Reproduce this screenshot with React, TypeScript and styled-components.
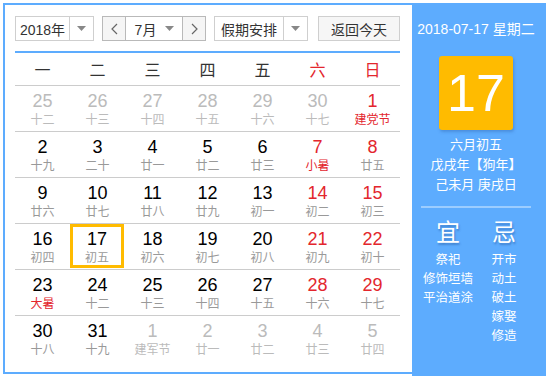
import styled, { createGlobalStyle } from "styled-components";

const GlobalStyle = createGlobalStyle`
  html, body {
    margin: 0;
    padding: 0;
    overflow: hidden;
    background: #ffffff;
    font-family: "Liberation Sans", "Noto Sans CJK SC", sans-serif;
  }
`;

const BLUE = "#5dacfe";
const RED = "#e3262d";

interface Day {
  num: number
  lunar: string
  other?: boolean
  weekend?: boolean
  redLunar?: boolean
}

const rows: Day[][] = [
  [
    { num: 25, lunar: "十二", other: true },
    { num: 26, lunar: "十三", other: true },
    { num: 27, lunar: "十四", other: true },
    { num: 28, lunar: "十五", other: true },
    { num: 29, lunar: "十六", other: true },
    { num: 30, lunar: "十七", other: true },
    { num: 1, lunar: "建党节", weekend: true, redLunar: true },
  ],
  [
    { num: 2, lunar: "十九" },
    { num: 3, lunar: "二十" },
    { num: 4, lunar: "廿一" },
    { num: 5, lunar: "廿二" },
    { num: 6, lunar: "廿三" },
    { num: 7, lunar: "小暑", weekend: true, redLunar: true },
    { num: 8, lunar: "廿五", weekend: true },
  ],
  [
    { num: 9, lunar: "廿六" },
    { num: 10, lunar: "廿七" },
    { num: 11, lunar: "廿八" },
    { num: 12, lunar: "廿九" },
    { num: 13, lunar: "初一" },
    { num: 14, lunar: "初二", weekend: true },
    { num: 15, lunar: "初三", weekend: true },
  ],
  [
    { num: 16, lunar: "初四" },
    { num: 17, lunar: "初五" },
    { num: 18, lunar: "初六" },
    { num: 19, lunar: "初七" },
    { num: 20, lunar: "初八" },
    { num: 21, lunar: "初九", weekend: true },
    { num: 22, lunar: "初十", weekend: true },
  ],
  [
    { num: 23, lunar: "大暑", redLunar: true },
    { num: 24, lunar: "十二" },
    { num: 25, lunar: "十三" },
    { num: 26, lunar: "十四" },
    { num: 27, lunar: "十五" },
    { num: 28, lunar: "十六", weekend: true },
    { num: 29, lunar: "十七", weekend: true },
  ],
  [
    { num: 30, lunar: "十八" },
    { num: 31, lunar: "十九" },
    { num: 1, lunar: "建军节", other: true },
    { num: 2, lunar: "廿一", other: true },
    { num: 3, lunar: "廿二", other: true },
    { num: 4, lunar: "廿三", other: true },
    { num: 5, lunar: "廿四", other: true },
  ],
];

const weekdays = ["一", "二", "三", "四", "五", "六", "日"];
const good = ["祭祀", "修饰垣墙", "平治道涂"];
const bad = ["开市", "动土", "破土", "嫁娶", "修造"];

const Arrow = () => (
  <svg width="9" height="5" viewBox="0 0 9 5">
    <path d="M0 0 L9 0 L4.5 5 Z" fill="#888" />
  </svg>
);

const Chevron = ({ dir }: { dir: "left" | "right" }) => (
  <svg width="7" height="12" viewBox="0 0 7 12">
    <path
      d={dir === "left" ? "M6 1 L1 6 L6 11" : "M1 1 L6 6 L1 11"}
      fill="none"
      stroke="#666"
      strokeWidth="1.2"
    />
  </svg>
);

const App = () => {
  return (
    <>
      <GlobalStyle />
      <Widget>
        <LeftPanel>
          <Toolbar>
            <Select width={79}>
              <SelectLabel>2018年</SelectLabel>
              <SelectArrow><Arrow /></SelectArrow>
            </Select>
            <MonthGroup>
              <NavButton><Chevron dir="left" /></NavButton>
              <MonthSelect>
                <SelectLabel>7月</SelectLabel>
                <Arrow />
              </MonthSelect>
              <NavButton><Chevron dir="right" /></NavButton>
            </MonthGroup>
            <Select width={94}>
              <SelectLabel>假期安排</SelectLabel>
              <SelectArrow><Arrow /></SelectArrow>
            </Select>
            <TodayButton>返回今天</TodayButton>
          </Toolbar>
          <Table>
            <HeaderRow>
              {weekdays.map((w, i) => (
                <Weekday key={w} weekend={i >= 5}>{w}</Weekday>
              ))}
            </HeaderRow>
            {rows.map((row, r) => (
              <Row key={r} last={r === rows.length - 1}>
                {row.map((d, i) => (
                  <Cell key={i} today={r === 3 && i === 1}>
                    <DayNum other={d.other} weekend={d.weekend}>{d.num}</DayNum>
                    <Lunar other={d.other} red={d.redLunar}>{d.lunar}</Lunar>
                  </Cell>
                ))}
              </Row>
            ))}
          </Table>
        </LeftPanel>
        <RightPanel>
          <DateLine>2018-07-17 星期二</DateLine>
          <BigDay>17</BigDay>
          <LunarInfo>
            <div>六月初五</div>
            <div>戊戌年【狗年】</div>
            <div>己未月 庚戌日</div>
          </LunarInfo>
          <Divider />
          <Almanac>
            <AlmanacCol>
              <AlmanacTitle>宜</AlmanacTitle>
              {good.map((g) => <AlmanacItem key={g}>{g}</AlmanacItem>)}
            </AlmanacCol>
            <AlmanacCol>
              <AlmanacTitle>忌</AlmanacTitle>
              {bad.map((b) => <AlmanacItem key={b}>{b}</AlmanacItem>)}
            </AlmanacCol>
          </Almanac>
        </RightPanel>
      </Widget>
    </>
  );
};

const Widget = styled.div`
  display: flex;
  align-items: flex-start;
  margin: 3px 0 0 3px;
  width: 543px;
`;

const LeftPanel = styled.div`
  box-sizing: border-box;
  width: 409px;
  height: 371px;
  border: 2px solid ${BLUE};
  border-right: none;
  padding: 11px 12px 0 10px;
`;

const Toolbar = styled.div`
  display: flex;
  align-items: center;
  height: 25px;
  gap: 8px;
`;

const Select = styled.div<{ width: number }>`
  box-sizing: border-box;
  display: flex;
  width: ${(p) => p.width}px;
  height: 25px;
  border: 1px solid #cfcfcf;
  background: #fff;
  font-size: 14px;
  color: #333;
`;

const SelectLabel = styled.span`
  flex: 1;
  display: flex;
  align-items: center;
  justify-content: center;
  font-family: "Liberation Sans", "Noto Sans CJK SC", sans-serif;
  font-size: 14px;
  color: #333;
`;

const SelectArrow = styled.span`
  width: 23px;
  display: flex;
  align-items: center;
  justify-content: center;
  border-left: 1px solid #cfcfcf;
`;

const MonthGroup = styled.div`
  box-sizing: border-box;
  display: flex;
  width: 104px;
  height: 25px;
  border: 1px solid #b9b9b9;
`;

const NavButton = styled.div`
  width: 22px;
  display: flex;
  align-items: center;
  justify-content: center;
  background: #f5f5f5;
`;

const MonthSelect = styled.div`
  flex: 1;
  display: flex;
  align-items: center;
  padding-right: 8px;
  border-left: 1px solid #b9b9b9;
  border-right: 1px solid #b9b9b9;
  background: #fff;
`;

const TodayButton = styled.div`
  box-sizing: border-box;
  margin-left: 2px;
  width: 82px;
  height: 25px;
  display: flex;
  align-items: center;
  justify-content: center;
  border: 1px solid #cfcfcf;
  background: #f6f6f6;
  font-size: 14px;
  color: #333;
`;

const Table = styled.div`
  margin-top: 10px;
  width: 385px;
  border-top: 2px solid ${BLUE};
`;

const HeaderRow = styled.div`
  display: grid;
  grid-template-columns: repeat(7, 55px);
  height: 32px;
  border-bottom: 1px solid #cccccc;
`;

const Weekday = styled.div<{ weekend: boolean }>`
  display: flex;
  align-items: center;
  justify-content: center;
  font-size: 16px;
  color: ${(p) => (p.weekend ? RED : "#333")};
`;

const Row = styled.div<{ last: boolean }>`
  display: grid;
  grid-template-columns: repeat(7, 55px);
  height: 45px;
  border-bottom: ${(p) => (p.last ? "none" : "1px solid #cccccc")};
`;

const Cell = styled.div<{ today: boolean }>`
  box-sizing: border-box;
  display: flex;
  flex-direction: column;
  align-items: center;
  padding-top: ${(p) => (p.today ? "2px" : "5px")};
  border: ${(p) => (p.today ? "3px solid #ffbb00" : "none")};
  height: ${(p) => (p.today ? "44px" : "45px")};
  margin-right: ${(p) => (p.today ? "1px" : "0")};
`;

const DayNum = styled.div<{ other?: boolean; weekend?: boolean }>`
  font-family: "Liberation Sans", sans-serif;
  font-size: 18px;
  line-height: 20px;
  color: ${(p) => (p.other ? "#bbbbbb" : p.weekend ? RED : "#000")};
`;

const Lunar = styled.div<{ other?: boolean; red?: boolean }>`
  margin-top: 2px;
  font-size: 12px;
  line-height: 14px;
  color: ${(p) => (p.other ? "#bbbbbb" : p.red ? RED : "#999")};
`;

const RightPanel = styled.div`
  box-sizing: border-box;
  width: 134px;
  height: 380px;
  background: ${BLUE};
  display: flex;
  flex-direction: column;
  align-items: center;
  padding-right: 6px;
  color: #fff;
`;

const DateLine = styled.div`
  margin-top: 18px;
  font-size: 14px;
  line-height: 16px;
`;

const BigDay = styled.div`
  margin-top: 19px;
  width: 74px;
  height: 74px;
  border-radius: 3px;
  background: #ffbb00;
  box-shadow: 1px 2px 3px rgba(40, 90, 160, 0.35);
  display: flex;
  align-items: center;
  justify-content: center;
  font-family: "Liberation Sans", sans-serif;
  font-size: 52px;
  color: #fff;
`;

const LunarInfo = styled.div`
  margin-top: 5px;
  font-size: 13px;
  line-height: 20px;
  text-align: center;
`;

const Divider = styled.div`
  margin-top: 11px;
  width: 110px;
  height: 2px;
  background: #9ccdff;
`;

const Almanac = styled.div`
  display: flex;
  gap: 6px;
  margin-top: 12px;
`;

const AlmanacCol = styled.div`
  width: 50px;
  display: flex;
  flex-direction: column;
  align-items: center;
`;

const AlmanacTitle = styled.div`
  font-size: 24px;
  line-height: 26px;
  text-shadow: 1px 2px 2px rgba(30, 80, 150, 0.45);
  margin-bottom: 5px;
`;

const AlmanacItem = styled.div`
  font-size: 12.5px;
  line-height: 19px;
`;

export default App;
